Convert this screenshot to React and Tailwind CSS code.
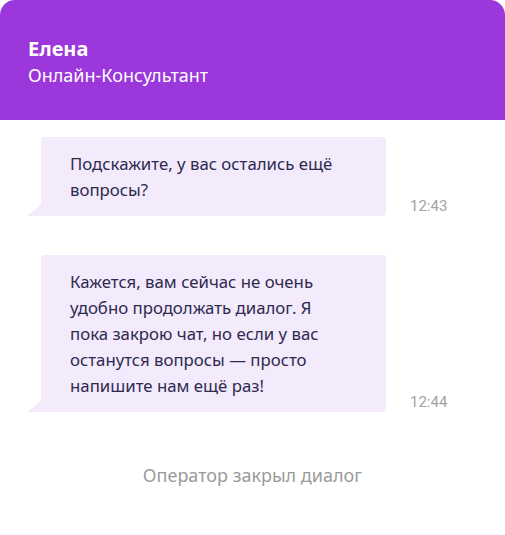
const messages = [
  {
    text: "Подскажите, у вас остались ещё\nвопросы?",
    time: "12:43",
  },
  {
    text: "Кажется, вам сейчас не очень\nудобно продолжать диалог. Я\nпока закрою чат, но если у вас\nостанутся вопросы — просто\nнапишите нам ещё раз!",
    time: "12:44",
  },
]

function Bubble({ text, time }) {
  return (
    <div className="flex items-end">
      <div className="relative ml-[41px] w-[345px] rounded-[4px] rounded-bl-none bg-[#f3eafc] pl-[29px] pr-[20px] pt-[14px] pb-[13px]">
        {/* tail */}
        <div className="absolute bottom-0 left-[-14px] h-[11px] w-[14px] bg-[#f3eafc] [clip-path:polygon(100%_0,100%_100%,0_100%)]" />
        <p className="whitespace-pre-line text-[16.8px] leading-[26px] text-[#2e2a4f]">{text}</p>
      </div>
      <span className="ml-[24px] mb-[1px] font-['Roboto'] text-[15px] leading-[18px] text-[#a3a3a3]">
        {time}
      </span>
    </div>
  )
}

export default function App() {
  return (
    <div className="w-[505px] h-[535px] bg-white font-['Noto_Sans',sans-serif]">
      {/* Header */}
      <div className="h-[120px] rounded-t-[15px] bg-[#9b37db] px-[28px] pt-[36px] text-white">
        <h1 className="text-[20px] font-bold leading-[26px]">Елена</h1>
        <p className="text-[18px] leading-[26px]">Онлайн-Консультант</p>
      </div>

      {/* Messages */}
      <div className="flex flex-col gap-[39px] pt-[17px]">
        {messages.map((m, i) => (
          <Bubble key={i} text={m.text} time={m.time} />
        ))}
      </div>

      <p className="mt-[50px] text-center text-[18px] leading-[26px] text-[#9b9b9b]">
        Оператор закрыл диалог
      </p>
    </div>
  )
}
